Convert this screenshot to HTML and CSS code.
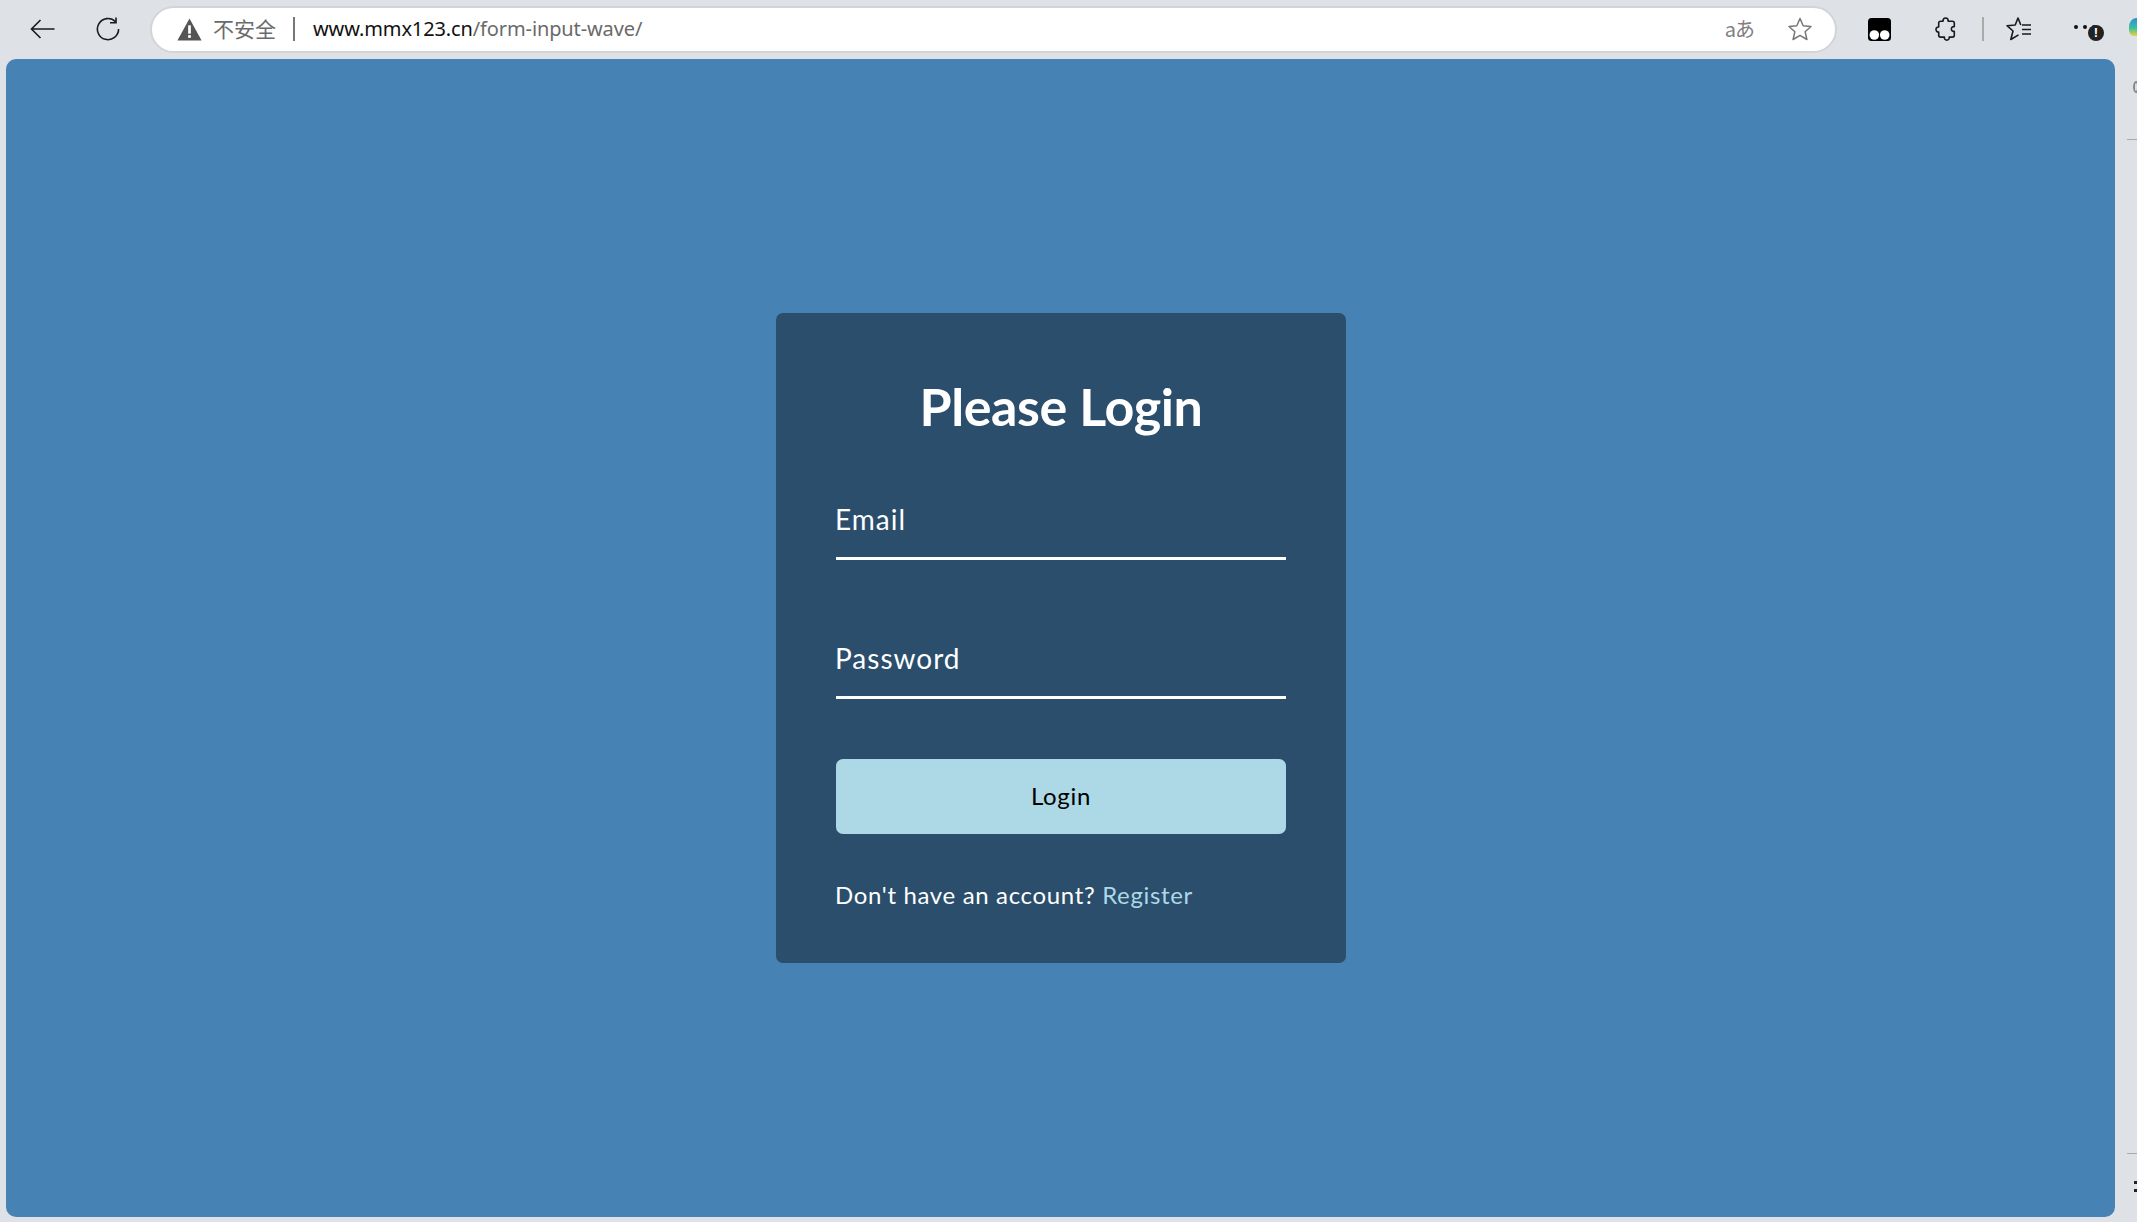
FILE: index.html
```html
<!DOCTYPE html>
<html lang="zh-CN">
<head>
<meta charset="utf-8">
<title>Form Input Wave</title>
<link rel="stylesheet" href="styles.css">
</head>
<body>
<header class="toolbar">
  <svg class="ic ic-back" viewBox="0 0 25 20"><path d="M24.5 10H1.5M10.5 1 1.500 10l9 9" fill="none" stroke="#1a1a1a" stroke-width="1.6"/></svg>
  <svg class="ic ic-reload" viewBox="0 0 24 24"><path d="M19.500 4.600A10.600 10.600 0 1 0 22.600 12" fill="none" stroke="#1a1a1a" stroke-width="1.6"/><path d="M20 .5v5.200h-6" fill="none" stroke="#1a1a1a" stroke-width="1.6"/></svg>
  <div class="address">
    <svg class="ic ic-warn" viewBox="0 0 24 22"><path d="M12 .5 23.600 21.500H.4z" fill="#555"/><rect x="10.700" y="7" width="2.600" height="8" fill="#fff"/><rect x="10.700" y="16.400" width="2.600" height="2.600" fill="#fff"/></svg>
    <span class="insecure">不安全</span>
    <span class="addr-sep"></span>
    <span class="url"><span class="host">www.mmx123.cn</span>/form-input-wave/</span>
    <span class="translate">aあ</span>
    <svg class="ic ic-star" viewBox="0 0 24 24"><path d="M12 1.500 15.200 8.800 23 9.500 17.100 14.700 18.900 22.500 12 18.400 5.100 22.500 6.900 14.700 1 9.500 8.800 8.800z" fill="none" stroke="#777" stroke-width="1.500" stroke-linejoin="round"/></svg>
  </div>
  <svg class="ic ic-tanuki" viewBox="0 0 23 23"><rect width="23" height="23" rx="3.500" fill="#000"/><circle cx="6.300" cy="17" r="4.800" fill="#fff"/><circle cx="16.700" cy="17" r="4.800" fill="#fff"/></svg>
  <svg class="ic ic-puzzle" viewBox="0 0 22 24"><path d="M8 4.200C8 1.800 9.300 1 10.600 1s2.600.8 2.600 3.200h4.200c1.300 0 1.900.7 1.900 1.900v3.600c-1.900-.4-2.900.7-2.900 2.300s1 2.700 2.900 2.300v3.900c0 1.200-.6 1.900-1.900 1.900h-3.200c.3 1.900-.8 3-2.400 3s-2.700-1.100-2.400-3H5.600c-1.300 0-1.900-.7-1.900-1.900v-3.200C2 15.200 1 14 1 12.500s1-2.700 2.700-2.500V6.100c0-1.200.6-1.900 1.900-1.900z" fill="none" stroke="#1a1a1a" stroke-width="1.600" stroke-linejoin="round"/></svg>
  <span class="tool-sep"></span>
  <svg class="ic ic-fav" viewBox="0 0 25 24"><path d="M14.800 8 12 1 9.200 8 1 8.700l6 5.300-2.200 8.500 7.700-4.600" fill="none" stroke="#1a1a1a" stroke-width="1.600" stroke-linejoin="round"/><path d="M16 8h9M16 12.500h9M16 17h9" fill="none" stroke="#1a1a1a" stroke-width="1.600"/></svg>
  <div class="more">
    <i class="dot"></i><i class="dot"></i><i class="dot"></i>
    <span class="badge">!</span>
  </div>
  <span class="edge-logo"></span>
</header>
<div class="content">
  <main class="page">
    <section class="card">
      <h1 class="title">Please Login</h1>
      <form class="login-form">
        <label class="field">Email</label>
        <label class="field">Password</label>
        <button class="btn" type="button">Login</button>
        <p class="register">Don't have an account? <a class="link" href="#">Register</a></p>
      </form>
    </section>
  </main>
  <aside class="sidebar">
    <div class="side-top"><i class="side-circle"></i><i class="side-line"></i></div>
    <div class="side-bottom"><i class="side-line"></i><i class="side-dots"></i></div>
  </aside>
</div>
</body>
</html>
```

FILE: styles.css
```css
* { box-sizing: border-box; }
html, body { margin: 0; height: 100%; overflow: hidden; }
body {
  display: flex;
  flex-direction: column;
  height: 1222px;
  background: #dee1e6;
  font-family: "Lato", "Noto Sans", sans-serif;
}
.toolbar {
  flex: 0 0 59px;
  display: flex;
  align-items: center;
  padding: 0 0 1px 30px;
  overflow: hidden;
}
.ic { display: block; flex: none; }
.ic-back { width: 25px; height: 20px; }
.ic-reload { width: 24px; height: 24px; margin-left: 41px; }
.address {
  flex: none;
  width: 1687px;
  height: 47px;
  margin-left: 30px;
  padding: 0 23px 0 25px;
  display: flex;
  align-items: center;
  background: #fff;
  border: 2px solid #d2d4d7;
  border-radius: 24px;
}
.ic-warn { width: 25px; height: 23px; }
.insecure {
  margin: -2px 0 0 11px;
  font: 21px/1 "Noto Sans CJK SC", sans-serif;
  color: #6b6b6b;
  width: 64px;
}
.addr-sep { width: 2px; height: 24px; background: #777; margin-left: 16px; }
.url {
  margin-left: 18px;
  font: 20px/1 "Noto Sans", sans-serif;
  color: #6a6a6a;
  letter-spacing: -.12px;
}
.host { color: #111; }
.translate {
  margin-left: auto;
  font: 20px/1 "Noto Sans CJK JP", sans-serif;
  color: #808080;
  letter-spacing: -1px;
}
.ic-star { width: 24px; height: 24px; margin-left: 34px; }
.ic-tanuki { width: 23px; height: 23px; margin-left: 31px; }
.ic-puzzle { width: 22px; height: 24px; margin-left: 44px; }
.tool-sep { flex: none; width: 2px; height: 24px; background: #aaa; margin-left: 25px; }
.ic-fav { width: 25px; height: 24px; margin-left: 22px; }
.more {
  position: relative;
  flex: none;
  display: flex;
  gap: 5px;
  margin-left: 43px;
  margin-top: -5px;
}
.dot { width: 4px; height: 4px; border-radius: 50%; background: #111; display: block; }
.badge {
  position: absolute;
  left: 14px;
  top: 0;
  width: 16px;
  height: 16px;
  border-radius: 50%;
  background: #222;
  color: #fff;
  font: bold 13px/16px "Liberation Sans", sans-serif;
  text-align: center;
}
.edge-logo {
  flex: none;
  width: 14px;
  height: 18px;
  margin-left: 33px;
  margin-top: -4px;
  border-radius: 60% 60% 40% 40%;
  background: linear-gradient(#2f8fd6 0%, #35c1a0 55%, #f0d23a 100%);
}
.content {
  flex: 0 0 1158px;
  display: flex;
  padding-left: 6px;
}
.page {
  flex: 0 0 2109px;
  display: flex;
  justify-content: center;
  background: #4682b4;
  border-radius: 10px;
  padding: 254px 0 0 1px;
}
.card {
  width: 570px;
  height: 650px;
  padding: 0 60px;
  background: #2a4e6c;
  border-radius: 7px;
  color: #fff;
}
.title {
  margin: 0;
  padding-top: 65px;
  font-size: 52px;
  line-height: 56px;
  font-weight: 700;
  text-align: center;
  letter-spacing: -.4px;
}
.login-form { display: flex; flex-direction: column; }
.field {
  display: flex;
  align-items: flex-end;
  height: 139px;
  padding-bottom: 20px;
  font-size: 28px;
  line-height: 36px;
  letter-spacing: 1px;
  text-indent: -1px;
  border-bottom: 3px solid #fff;
}
.field:first-child { height: 126px; }
.btn {
  height: 75px;
  margin-top: 60px;
  padding-bottom: 3px;
  border: 0;
  border-radius: 7px;
  background: #add8e6;
  color: #000;
  font: 24px "Lato", "Noto Sans", sans-serif;
  letter-spacing: .7px;
}
.register { margin: 45px 0 0 -1px; font-size: 24px; line-height: 32px; letter-spacing: .66px; }
.link { color: #add8e6; text-decoration: none; }
.sidebar {
  flex: 1;
  display: flex;
  flex-direction: column;
  justify-content: space-between;
  align-items: flex-end;
  padding: 22px 0 25px;
}
.side-top, .side-bottom { width: 10px; display: flex; flex-direction: column; }
.side-line { display: block; height: 1px; background: #aaa; }
.side-circle { display: block; width: 6px; height: 12px; margin: 0 0 46px 6px; border: 2px solid #888; border-radius: 50%; }
.side-dots { display: block; width: 3px; height: 11px; margin: 27px 0 0 7px; border-top: 3px solid #222; border-bottom: 3px solid #222; }
```
